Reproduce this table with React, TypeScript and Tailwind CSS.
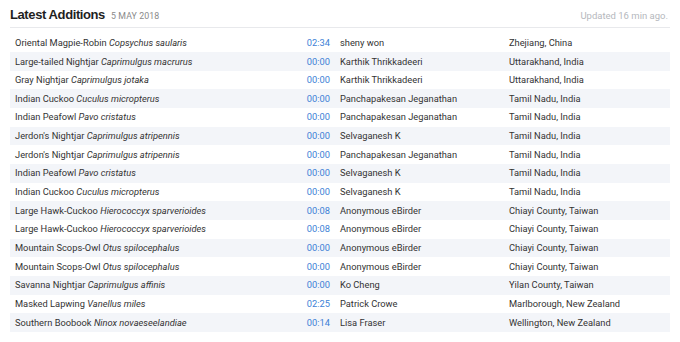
const rows = [
  ["Oriental Magpie-Robin", "Copsychus saularis", "02:34", "sheny won", "Zhejiang, China"],
  ["Large-tailed Nightjar", "Caprimulgus macrurus", "00:00", "Karthik Thrikkadeeri", "Uttarakhand, India"],
  ["Gray Nightjar", "Caprimulgus jotaka", "00:00", "Karthik Thrikkadeeri", "Uttarakhand, India"],
  ["Indian Cuckoo", "Cuculus micropterus", "00:00", "Panchapakesan Jeganathan", "Tamil Nadu, India"],
  ["Indian Peafowl", "Pavo cristatus", "00:00", "Panchapakesan Jeganathan", "Tamil Nadu, India"],
  ["Jerdon's Nightjar", "Caprimulgus atripennis", "00:00", "Selvaganesh K", "Tamil Nadu, India"],
  ["Jerdon's Nightjar", "Caprimulgus atripennis", "00:00", "Panchapakesan Jeganathan", "Tamil Nadu, India"],
  ["Indian Peafowl", "Pavo cristatus", "00:00", "Selvaganesh K", "Tamil Nadu, India"],
  ["Indian Cuckoo", "Cuculus micropterus", "00:00", "Selvaganesh K", "Tamil Nadu, India"],
  ["Large Hawk-Cuckoo", "Hierococcyx sparverioides", "00:08", "Anonymous eBirder", "Chiayi County, Taiwan"],
  ["Large Hawk-Cuckoo", "Hierococcyx sparverioides", "00:08", "Anonymous eBirder", "Chiayi County, Taiwan"],
  ["Mountain Scops-Owl", "Otus spilocephalus", "00:00", "Anonymous eBirder", "Chiayi County, Taiwan"],
  ["Mountain Scops-Owl", "Otus spilocephalus", "00:00", "Anonymous eBirder", "Chiayi County, Taiwan"],
  ["Savanna Nightjar", "Caprimulgus affinis", "00:00", "Ko Cheng", "Yilan County, Taiwan"],
  ["Masked Lapwing", "Vanellus miles", "02:25", "Patrick Crowe", "Marlborough, New Zealand"],
  ["Southern Boobook", "Ninox novaeseelandiae", "00:14", "Lisa Fraser", "Wellington, New Zealand"],
];

const App = () => {
  return (
    <div className="w-[680px] h-[342px] bg-white px-[10px] pt-[5px] font-['Roboto',sans-serif] text-[#333]">
      <div className="flex items-baseline h-[23px] border-b border-[#e8e9ec]">
        <h2 className="text-[13px] font-bold text-[#1f1f1f] font-['Liberation_Sans',sans-serif] tracking-[-0.4px]">
          Latest Additions
        </h2>
        <span className="ml-[6px] text-[8.8px] text-[#8a8a8a] tracking-[0.1px]">5 MAY 2018</span>
        <span className="ml-auto mr-[2px] text-[9.5px] text-[#b5b8bd]">Updated 16 min ago.</span>
      </div>
      <div className="mt-[5.5px] text-[9.3px]">
        {rows.map((r, i) => (
          <div
            key={i}
            className={`flex items-center h-[18.67px] pl-[5px] ${i % 2 === 1 ? "bg-[#f3f5f9]" : "bg-white"}`}
          >
            <div className="w-[275px] whitespace-nowrap">
              {r[0]} <i>{r[1]}</i>
            </div>
            <div className="w-[40px] text-right text-[#3d7fd6]">{r[2]}</div>
            <div className="w-[179px] pl-[10px] whitespace-nowrap">{r[3]}</div>
            <div className="flex-1 whitespace-nowrap">{r[4]}</div>
          </div>
        ))}
      </div>
    </div>
  );
};

export default App;
